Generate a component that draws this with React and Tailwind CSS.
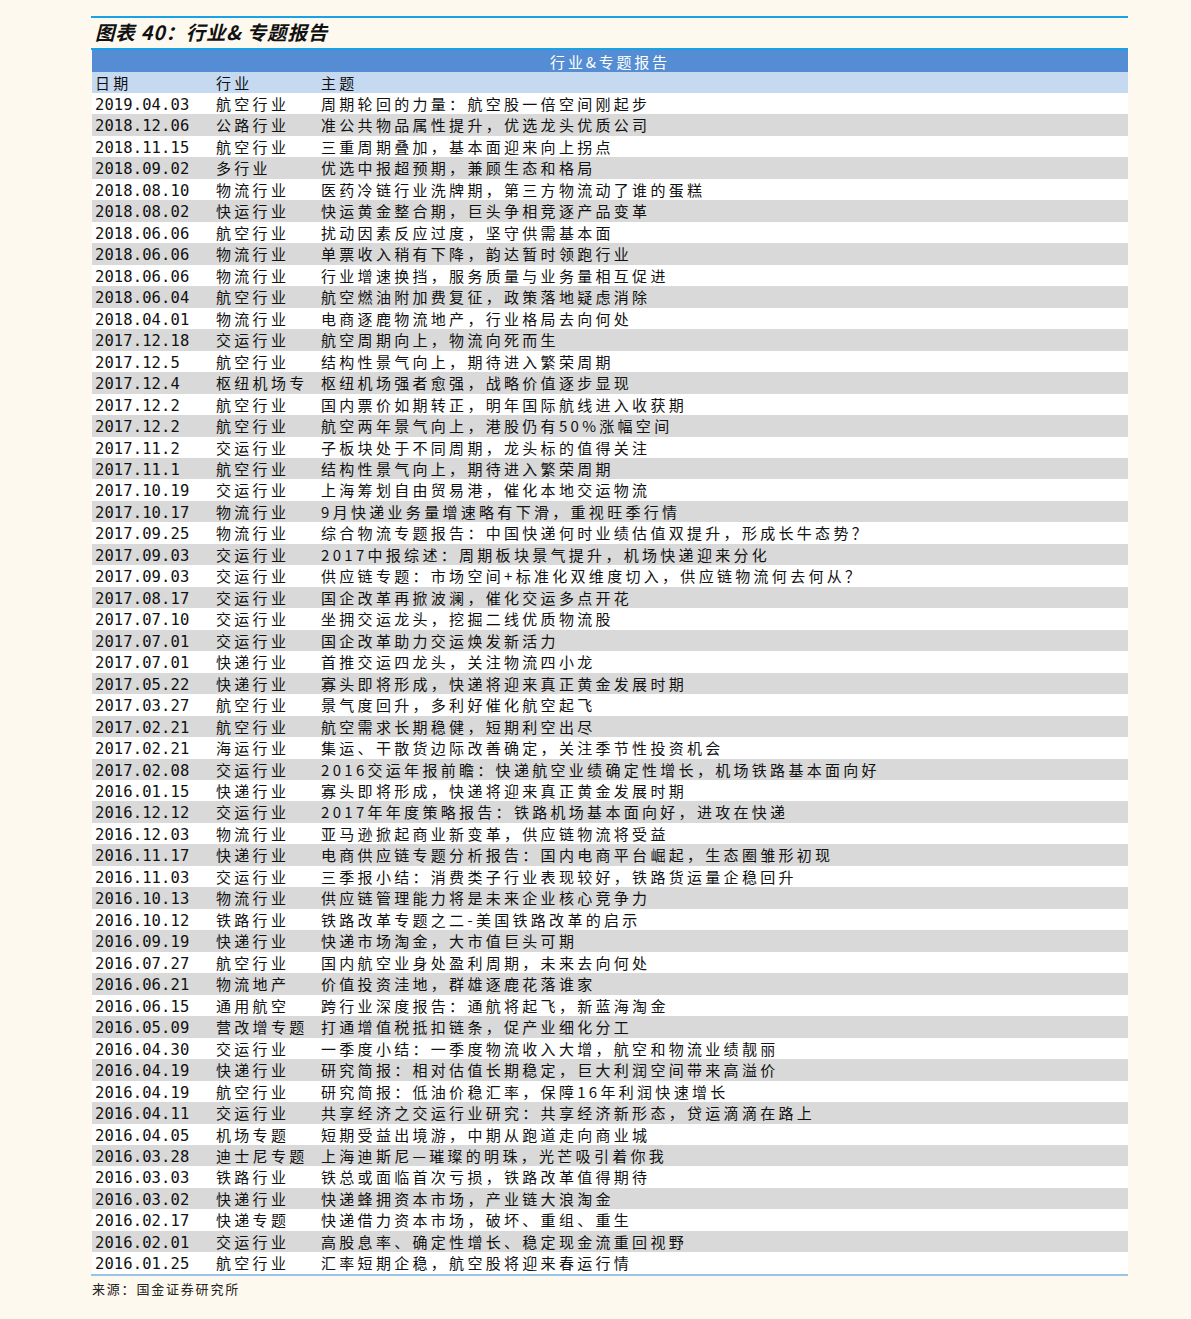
const rows = [
  ['2019.04.03', '航空行业', '周期轮回的力量：航空股一倍空间刚起步'],
  ['2018.12.06', '公路行业', '准公共物品属性提升，优选龙头优质公司'],
  ['2018.11.15', '航空行业', '三重周期叠加，基本面迎来向上拐点'],
  ['2018.09.02', '多行业', '优选中报超预期，兼顾生态和格局'],
  ['2018.08.10', '物流行业', '医药冷链行业洗牌期，第三方物流动了谁的蛋糕'],
  ['2018.08.02', '快运行业', '快运黄金整合期，巨头争相竞逐产品变革'],
  ['2018.06.06', '航空行业', '扰动因素反应过度，坚守供需基本面'],
  ['2018.06.06', '物流行业', '单票收入稍有下降，韵达暂时领跑行业'],
  ['2018.06.06', '物流行业', '行业增速换挡，服务质量与业务量相互促进'],
  ['2018.06.04', '航空行业', '航空燃油附加费复征，政策落地疑虑消除'],
  ['2018.04.01', '物流行业', '电商逐鹿物流地产，行业格局去向何处'],
  ['2017.12.18', '交运行业', '航空周期向上，物流向死而生'],
  ['2017.12.5', '航空行业', '结构性景气向上，期待进入繁荣周期'],
  ['2017.12.4', '枢纽机场专', '枢纽机场强者愈强，战略价值逐步显现'],
  ['2017.12.2', '航空行业', '国内票价如期转正，明年国际航线进入收获期'],
  ['2017.12.2', '航空行业', '航空两年景气向上，港股仍有50%涨幅空间'],
  ['2017.11.2', '交运行业', '子板块处于不同周期，龙头标的值得关注'],
  ['2017.11.1', '航空行业', '结构性景气向上，期待进入繁荣周期'],
  ['2017.10.19', '交运行业', '上海筹划自由贸易港，催化本地交运物流'],
  ['2017.10.17', '物流行业', '9月快递业务量增速略有下滑，重视旺季行情'],
  ['2017.09.25', '物流行业', '综合物流专题报告：中国快递何时业绩估值双提升，形成长牛态势？'],
  ['2017.09.03', '交运行业', '2017中报综述：周期板块景气提升，机场快递迎来分化'],
  ['2017.09.03', '交运行业', '供应链专题：市场空间+标准化双维度切入，供应链物流何去何从？'],
  ['2017.08.17', '交运行业', '国企改革再掀波澜，催化交运多点开花'],
  ['2017.07.10', '交运行业', '坐拥交运龙头，挖掘二线优质物流股'],
  ['2017.07.01', '交运行业', '国企改革助力交运焕发新活力'],
  ['2017.07.01', '快递行业', '首推交运四龙头，关注物流四小龙'],
  ['2017.05.22', '快递行业', '寡头即将形成，快递将迎来真正黄金发展时期'],
  ['2017.03.27', '航空行业', '景气度回升，多利好催化航空起飞'],
  ['2017.02.21', '航空行业', '航空需求长期稳健，短期利空出尽'],
  ['2017.02.21', '海运行业', '集运、干散货边际改善确定，关注季节性投资机会'],
  ['2017.02.08', '交运行业', '2016交运年报前瞻：快递航空业绩确定性增长，机场铁路基本面向好'],
  ['2016.01.15', '快递行业', '寡头即将形成，快递将迎来真正黄金发展时期'],
  ['2016.12.12', '交运行业', '2017年年度策略报告：铁路机场基本面向好，进攻在快递'],
  ['2016.12.03', '物流行业', '亚马逊掀起商业新变革，供应链物流将受益'],
  ['2016.11.17', '快递行业', '电商供应链专题分析报告：国内电商平台崛起，生态圈雏形初现'],
  ['2016.11.03', '交运行业', '三季报小结：消费类子行业表现较好，铁路货运量企稳回升'],
  ['2016.10.13', '物流行业', '供应链管理能力将是未来企业核心竞争力'],
  ['2016.10.12', '铁路行业', '铁路改革专题之二-美国铁路改革的启示'],
  ['2016.09.19', '快递行业', '快递市场淘金，大市值巨头可期'],
  ['2016.07.27', '航空行业', '国内航空业身处盈利周期，未来去向何处'],
  ['2016.06.21', '物流地产', '价值投资洼地，群雄逐鹿花落谁家'],
  ['2016.06.15', '通用航空', '跨行业深度报告：通航将起飞，新蓝海淘金'],
  ['2016.05.09', '营改增专题', '打通增值税抵扣链条，促产业细化分工'],
  ['2016.04.30', '交运行业', '一季度小结：一季度物流收入大增，航空和物流业绩靓丽'],
  ['2016.04.19', '快递行业', '研究简报：相对估值长期稳定，巨大利润空间带来高溢价'],
  ['2016.04.19', '航空行业', '研究简报：低油价稳汇率，保障16年利润快速增长'],
  ['2016.04.11', '交运行业', '共享经济之交运行业研究：共享经济新形态，贷运滴滴在路上'],
  ['2016.04.05', '机场专题', '短期受益出境游，中期从跑道走向商业城'],
  ['2016.03.28', '迪士尼专题', '上海迪斯尼—璀璨的明珠，光芒吸引着你我'],
  ['2016.03.03', '铁路行业', '铁总或面临首次亏损，铁路改革值得期待'],
  ['2016.03.02', '快递行业', '快递蜂拥资本市场，产业链大浪淘金'],
  ['2016.02.17', '快递专题', '快递借力资本市场，破坏、重组、重生'],
  ['2016.02.01', '交运行业', '高股息率、确定性增长、稳定现金流重回视野'],
  ['2016.01.25', '航空行业', '汇率短期企稳，航空股将迎来春运行情'],
];

const cjk = "font-['Noto_Sans_CJK_SC',sans-serif]";

export default function App() {
  return (
    <div className="min-h-[1319px] w-full bg-[#fdf9ee] pt-4 text-black">
      <div className="ml-[91px] w-[1037px]">
        {/* chart title */}
        <div className="h-[32px] border-t-2 border-[#1ba1e6] pl-[4px] pt-[4px]">
          <span className={`${cjk} text-[19.5px] font-bold italic leading-[20px] tracking-[0.8px] text-[#111]`}>
            图表 40：行业& 专题报告
          </span>
        </div>

        <div className="border-t-2 border-[#1ba1e6]">
          <div className="ml-px">
            <div className={`flex h-[22px] items-center justify-center bg-[#548dd4] ${cjk} text-[15px] leading-none tracking-[2.8px] text-white`}>
              行业&专题报告
            </div>
            <div className={`grid h-[21px] grid-cols-[121px_105px_1fr] items-center bg-[#c5d9f0] pl-[3px] ${cjk} text-[15px] leading-none tracking-[3.3px] text-[#111]`}>
              <span>日期</span>
              <span>行业</span>
              <span>主题</span>
            </div>
            {rows.map((r, i) => (
              <div
                key={i}
                className={`grid h-[21.47px] grid-cols-[121px_105px_1fr] items-baseline pl-[3px] pt-[3px] text-[15px] leading-[16px] text-[#111] ${i % 2 ? 'bg-[#d9d9d9]' : 'bg-white'}`}
              >
                <span className="font-['DejaVu_Sans_Mono',monospace] text-[15.5px] tracking-[0.1px]">{r[0]}</span>
                <span className={`${cjk} whitespace-nowrap tracking-[3.3px]`}>{r[1]}</span>
                <span className={`${cjk} whitespace-nowrap tracking-[3.3px]`}>{r[2]}</span>
              </div>
            ))}
          </div>
        </div>
        <div className="h-[2px] bg-[#9cc3e5]" />
        <div className={`pl-px pt-[6px] ${cjk} text-[13px] leading-none tracking-[1.8px] text-[#222]`}>
          来源：国金证券研究所
        </div>
      </div>
    </div>
  );
}
